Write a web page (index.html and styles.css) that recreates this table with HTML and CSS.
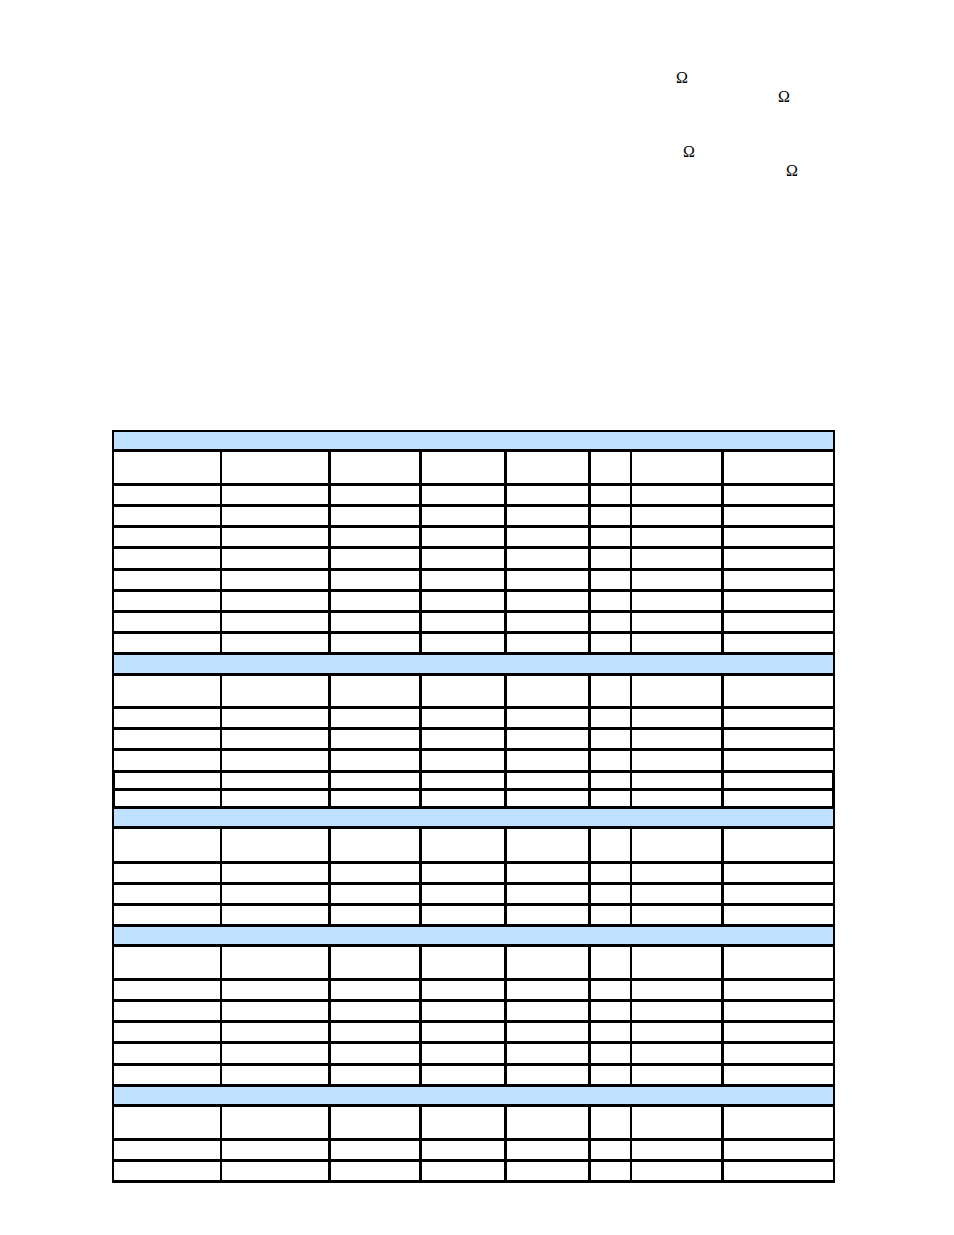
FILE: index.html
```html
<!DOCTYPE html>
<html>
<head>
<meta charset="utf-8">
<link rel="stylesheet" href="styles.css">
</head>
<body>
<div class="page">
  <div class="notes">
    <div class="ln o1">Ω</div>
    <div class="ln o2">Ω</div>
    <div class="ln o3 gap">Ω</div>
    <div class="ln o4">Ω</div>
  </div>

  <div class="tbl">
    <div class="blue"></div>
    <div class="row head"><div class="c c1"></div><div class="c c2"></div><div class="c c3"></div><div class="c c4"></div><div class="c c5"></div><div class="c c6"></div><div class="c c7"></div><div class="c c8"></div></div>
    <div class="row"><div class="c c1"></div><div class="c c2"></div><div class="c c3"></div><div class="c c4"></div><div class="c c5"></div><div class="c c6"></div><div class="c c7"></div><div class="c c8"></div></div>
    <div class="row"><div class="c c1"></div><div class="c c2"></div><div class="c c3"></div><div class="c c4"></div><div class="c c5"></div><div class="c c6"></div><div class="c c7"></div><div class="c c8"></div></div>
    <div class="row"><div class="c c1"></div><div class="c c2"></div><div class="c c3"></div><div class="c c4"></div><div class="c c5"></div><div class="c c6"></div><div class="c c7"></div><div class="c c8"></div></div>
    <div class="row"><div class="c c1"></div><div class="c c2"></div><div class="c c3"></div><div class="c c4"></div><div class="c c5"></div><div class="c c6"></div><div class="c c7"></div><div class="c c8"></div></div>
    <div class="row"><div class="c c1"></div><div class="c c2"></div><div class="c c3"></div><div class="c c4"></div><div class="c c5"></div><div class="c c6"></div><div class="c c7"></div><div class="c c8"></div></div>
    <div class="row"><div class="c c1"></div><div class="c c2"></div><div class="c c3"></div><div class="c c4"></div><div class="c c5"></div><div class="c c6"></div><div class="c c7"></div><div class="c c8"></div></div>
    <div class="row"><div class="c c1"></div><div class="c c2"></div><div class="c c3"></div><div class="c c4"></div><div class="c c5"></div><div class="c c6"></div><div class="c c7"></div><div class="c c8"></div></div>
    <div class="row"><div class="c c1"></div><div class="c c2"></div><div class="c c3"></div><div class="c c4"></div><div class="c c5"></div><div class="c c6"></div><div class="c c7"></div><div class="c c8"></div></div>

    <div class="blue"></div>
    <div class="row head"><div class="c c1"></div><div class="c c2"></div><div class="c c3"></div><div class="c c4"></div><div class="c c5"></div><div class="c c6"></div><div class="c c7"></div><div class="c c8"></div></div>
    <div class="row"><div class="c c1"></div><div class="c c2"></div><div class="c c3"></div><div class="c c4"></div><div class="c c5"></div><div class="c c6"></div><div class="c c7"></div><div class="c c8"></div></div>
    <div class="row"><div class="c c1"></div><div class="c c2"></div><div class="c c3"></div><div class="c c4"></div><div class="c c5"></div><div class="c c6"></div><div class="c c7"></div><div class="c c8"></div></div>
    <div class="row"><div class="c c1"></div><div class="c c2"></div><div class="c c3"></div><div class="c c4"></div><div class="c c5"></div><div class="c c6"></div><div class="c c7"></div><div class="c c8"></div></div>
    <div class="row short"><div class="c c1"></div><div class="c c2"></div><div class="c c3"></div><div class="c c4"></div><div class="c c5"></div><div class="c c6"></div><div class="c c7"></div><div class="c c8"></div></div>
    <div class="row short"><div class="c c1"></div><div class="c c2"></div><div class="c c3"></div><div class="c c4"></div><div class="c c5"></div><div class="c c6"></div><div class="c c7"></div><div class="c c8"></div></div>

    <div class="blue"></div>
    <div class="row head tall"><div class="c c1"></div><div class="c c2"></div><div class="c c3"></div><div class="c c4"></div><div class="c c5"></div><div class="c c6"></div><div class="c c7"></div><div class="c c8"></div></div>
    <div class="row"><div class="c c1"></div><div class="c c2"></div><div class="c c3"></div><div class="c c4"></div><div class="c c5"></div><div class="c c6"></div><div class="c c7"></div><div class="c c8"></div></div>
    <div class="row"><div class="c c1"></div><div class="c c2"></div><div class="c c3"></div><div class="c c4"></div><div class="c c5"></div><div class="c c6"></div><div class="c c7"></div><div class="c c8"></div></div>
    <div class="row"><div class="c c1"></div><div class="c c2"></div><div class="c c3"></div><div class="c c4"></div><div class="c c5"></div><div class="c c6"></div><div class="c c7"></div><div class="c c8"></div></div>

    <div class="blue"></div>
    <div class="row head"><div class="c c1"></div><div class="c c2"></div><div class="c c3"></div><div class="c c4"></div><div class="c c5"></div><div class="c c6"></div><div class="c c7"></div><div class="c c8"></div></div>
    <div class="row"><div class="c c1"></div><div class="c c2"></div><div class="c c3"></div><div class="c c4"></div><div class="c c5"></div><div class="c c6"></div><div class="c c7"></div><div class="c c8"></div></div>
    <div class="row"><div class="c c1"></div><div class="c c2"></div><div class="c c3"></div><div class="c c4"></div><div class="c c5"></div><div class="c c6"></div><div class="c c7"></div><div class="c c8"></div></div>
    <div class="row"><div class="c c1"></div><div class="c c2"></div><div class="c c3"></div><div class="c c4"></div><div class="c c5"></div><div class="c c6"></div><div class="c c7"></div><div class="c c8"></div></div>
    <div class="row"><div class="c c1"></div><div class="c c2"></div><div class="c c3"></div><div class="c c4"></div><div class="c c5"></div><div class="c c6"></div><div class="c c7"></div><div class="c c8"></div></div>
    <div class="row"><div class="c c1"></div><div class="c c2"></div><div class="c c3"></div><div class="c c4"></div><div class="c c5"></div><div class="c c6"></div><div class="c c7"></div><div class="c c8"></div></div>

    <div class="blue"></div>
    <div class="row head"><div class="c c1"></div><div class="c c2"></div><div class="c c3"></div><div class="c c4"></div><div class="c c5"></div><div class="c c6"></div><div class="c c7"></div><div class="c c8"></div></div>
    <div class="row"><div class="c c1"></div><div class="c c2"></div><div class="c c3"></div><div class="c c4"></div><div class="c c5"></div><div class="c c6"></div><div class="c c7"></div><div class="c c8"></div></div>
    <div class="row"><div class="c c1"></div><div class="c c2"></div><div class="c c3"></div><div class="c c4"></div><div class="c c5"></div><div class="c c6"></div><div class="c c7"></div><div class="c c8"></div></div>
  </div>
</div>
</body>
</html>
```

FILE: styles.css
```css
html, body {
  margin: 0;
  padding: 0;
  background: #ffffff;
}

.page {
  width: 954px;
  padding-top: 68px;
  font-family: "Liberation Serif", "Times New Roman", serif;
  color: #000;
}

.notes {
  display: flex;
  flex-direction: column;
}

.ln {
  font-size: 16px;
  line-height: 19px;
  height: 19px;
}

.o1 { margin-left: 676px; }
.o2 { margin-left: 778px; }
.o3 { margin-left: 683px; }
.o4 { margin-left: 786px; }
.gap { margin-top: 36px; }

.tbl {
  margin-top: 250px;
  margin-left: 112px;
  width: 719px;
  border-top: 2px solid #000;
  border-left: 2px solid #000;
  border-right: 2px solid #000;
}

.blue {
  box-sizing: border-box;
  height: 20.3px;
  background: #c0e0ff;
  border-bottom: 3px solid #000;
}

.row {
  box-sizing: border-box;
  display: flex;
  height: 21.2px;
  border-bottom: 3px solid #000;
  background: #fff;
}

.row.head { height: 33.5px; }
.row.head.tall { height: 34.6px; }

.row.short {
  height: 18px;
  box-shadow: inset 1px 0 0 #000, inset -1px 0 0 #000;
}

.c {
  flex: none;
  height: 100%;
}

.c1 { width: 106px; border-right: 2px solid #000; }
.c2 { width: 106px; border-right: 3px solid #000; }
.c3 { width: 88px;  border-right: 3px solid #000; }
.c4 { width: 82px;  border-right: 3px solid #000; }
.c5 { width: 81px;  border-right: 3px solid #000; }
.c6 { width: 39px;  border-right: 2px solid #000; }
.c7 { width: 89px;  border-right: 3px solid #000; }
.c8 { width: 109px; }
```
